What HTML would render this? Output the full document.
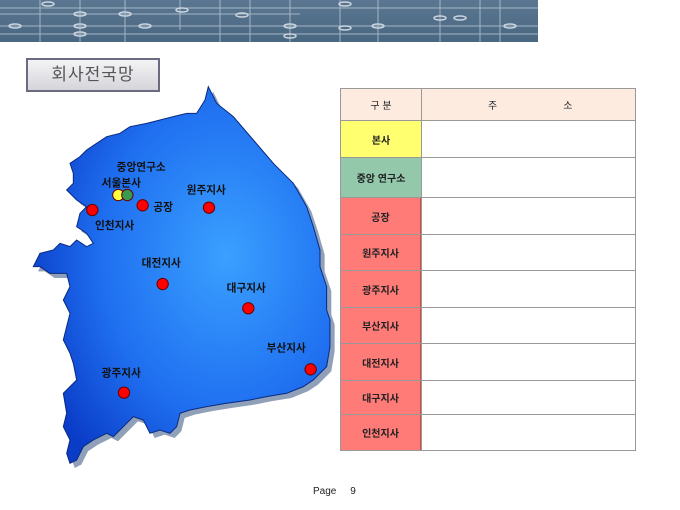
<!DOCTYPE html>
<html><head><meta charset="utf-8"><style>
body{margin:0;width:680px;height:510px;background:#fff;position:relative;overflow:hidden;font-family:"Liberation Sans","Noto Sans CJK KR",sans-serif}
.ban{position:absolute;left:0;top:0;width:538px;height:42px;background:linear-gradient(#5a7690,#4a6782)}
.title{position:absolute;left:26px;top:58px;width:130px;height:30px;border:2px solid #6a6a80;background:linear-gradient(#f4f4f6,#d4d4da);font-size:17px;color:#555;text-align:center;line-height:30px;letter-spacing:1px}
.c{position:absolute;box-sizing:border-box;border:1px solid #999;font-size:10px;font-weight:bold;color:#222;display:flex;align-items:center;justify-content:center}
.l{left:340px;width:82px}
.r{left:421px;width:215px;background:#fff}
.red{background:#ff7b78;border-right:2px solid #d04a48}
</style></head><body>
<div class="ban"><svg width="538" height="42">
<g stroke="#b8c8d6" stroke-width="1" fill="none" opacity=".8">
<path d="M0 8H540M0 26H540M0 34H540M0 14H300M40 0V42M80 0V42M125 0V42M180 0V30M220 0V42M250 0V42M290 0V42M340 0V42M378 0V42M440 0V42M480 0V42M500 0V42"/>
<g fill="none" stroke="#e8eef4" stroke-width="1.5">
<ellipse cx="48" cy="4" rx="6" ry="2"/><ellipse cx="80" cy="14" rx="6" ry="2"/><ellipse cx="125" cy="14" rx="6" ry="2"/><ellipse cx="80" cy="26" rx="6" ry="2"/><ellipse cx="80" cy="34" rx="6" ry="2"/><ellipse cx="145" cy="26" rx="6" ry="2"/><ellipse cx="182" cy="10" rx="6" ry="2"/><ellipse cx="242" cy="15" rx="6" ry="2"/><ellipse cx="290" cy="26" rx="6" ry="2"/><ellipse cx="290" cy="36" rx="6" ry="2"/><ellipse cx="345" cy="28" rx="6" ry="2"/><ellipse cx="378" cy="26" rx="6" ry="2"/><ellipse cx="345" cy="4" rx="6" ry="2"/><ellipse cx="440" cy="18" rx="6" ry="2"/><ellipse cx="460" cy="18" rx="6" ry="2"/><ellipse cx="510" cy="26" rx="6" ry="2"/><ellipse cx="15" cy="26" rx="6" ry="2"/>
</g></g></svg></div>
<div class="title">회사전국망</div>
<svg style="position:absolute;left:0;top:0" width="340" height="480">
<defs><radialGradient id="g" cx="0.65" cy="0.45" r="0.7"><stop offset="0" stop-color="#3aa0ff"/><stop offset="0.6" stop-color="#1f6ff0"/><stop offset="1" stop-color="#0a3cc8"/></radialGradient></defs>
<g transform="translate(20,80) scale(0.3333)">
<path id="m" d="M565 20L590 70L640 110L700 180L760 250L820 310L860 380L880 440L900 510L900 560L920 620L920 690L930 720L930 800L920 860L880 900L850 920L800 940L740 950L690 960L620 970L560 980L510 990L480 1000L470 1040L450 1060L420 1050L390 1060L370 1020L340 1010L310 1040L280 1070L260 1060L220 1080L190 1100L170 1140L150 1150L140 1120L150 1080L130 1040L140 1000L130 940L170 900L160 850L150 820L130 780L140 740L150 700L130 660L150 620L140 580L90 580L60 560L40 560L60 520L100 510L120 490L150 500L170 480L200 500L220 490L200 460L170 440L180 400L200 380L170 360L140 330L160 310L160 280L150 250L180 230L200 210L230 190L260 170L300 160L330 140L380 130L420 120L460 110L500 100L530 100L555 60Z" fill="#8fa0b8" transform="translate(14,14)"/>
<path d="M565 20L590 70L640 110L700 180L760 250L820 310L860 380L880 440L900 510L900 560L920 620L920 690L930 720L930 800L920 860L880 900L850 920L800 940L740 950L690 960L620 970L560 980L510 990L480 1000L470 1040L450 1060L420 1050L390 1060L370 1020L340 1010L310 1040L280 1070L260 1060L220 1080L190 1100L170 1140L150 1150L140 1120L150 1080L130 1040L140 1000L130 940L170 900L160 850L150 820L130 780L140 740L150 700L130 660L150 620L140 580L90 580L60 560L40 560L60 520L100 510L120 490L150 500L170 480L200 500L220 490L200 460L170 440L180 400L200 380L170 360L140 330L160 310L160 280L150 250L180 230L200 210L230 190L260 170L300 160L330 140L380 130L420 120L460 110L500 100L530 100L555 60Z" fill="url(#g)" stroke="#0a2a80" stroke-width="3"/>
<g stroke="#600" stroke-width="3"><circle cx="295" cy="345" r="17" fill="#ffff40"/><circle cx="322" cy="345" r="17" fill="#3a9a50"/>
<g fill="#f00"><circle cx="217" cy="390" r="17"/><circle cx="368" cy="376" r="17"/><circle cx="567" cy="383" r="17"/><circle cx="428" cy="612" r="17"/><circle cx="685" cy="685" r="17"/><circle cx="872" cy="868" r="17"/><circle cx="312" cy="938" r="17"/></g></g>
<g font-size="32" font-weight="bold" fill="#111" font-family="Liberation Sans,Noto Sans CJK KR,sans-serif">
<text x="290" y="272">중앙연구소</text><text x="245" y="320">서울본사</text><text x="500" y="340">원주지사</text><text x="400" y="392">공장</text><text x="225" y="447">인천지사</text><text x="365" y="560">대전지사</text><text x="620" y="635">대구지사</text><text x="740" y="815">부산지사</text><text x="245" y="890">광주지사</text></g>
</g></svg>
<div class="c l" style="top:88px;height:33px;background:#fdebe0;font-weight:normal">구 분</div>
<div class="c r" style="top:88px;height:33px;background:#fdebe0;font-weight:normal;justify-content:flex-start;padding-left:66px">주<span style="margin-left:66px">소</span></div>
<div class="c l" style="top:120px;height:38px;background:#ffff70">본사</div><div class="c r" style="top:120px;height:38px"></div>
<div class="c l" style="top:157px;height:41px;background:#94c8aa">중앙 연구소</div><div class="c r" style="top:157px;height:41px"></div>
<div class="c l red" style="top:197px;height:38px">공장</div><div class="c r" style="top:197px;height:38px"></div>
<div class="c l red" style="top:234px;height:37px">원주지사</div><div class="c r" style="top:234px;height:37px"></div>
<div class="c l red" style="top:270px;height:38px">광주지사</div><div class="c r" style="top:270px;height:38px"></div>
<div class="c l red" style="top:307px;height:37px">부산지사</div><div class="c r" style="top:307px;height:37px"></div>
<div class="c l red" style="top:343px;height:38px">대전지사</div><div class="c r" style="top:343px;height:38px"></div>
<div class="c l red" style="top:380px;height:35px">대구지사</div><div class="c r" style="top:380px;height:35px"></div>
<div class="c l red" style="top:414px;height:37px">인천지사</div><div class="c r" style="top:414px;height:37px"></div>
<div style="position:absolute;left:313px;top:486px;font-size:10px;color:#222">Page &nbsp;&nbsp;&nbsp;&nbsp;9</div>
</body></html>
